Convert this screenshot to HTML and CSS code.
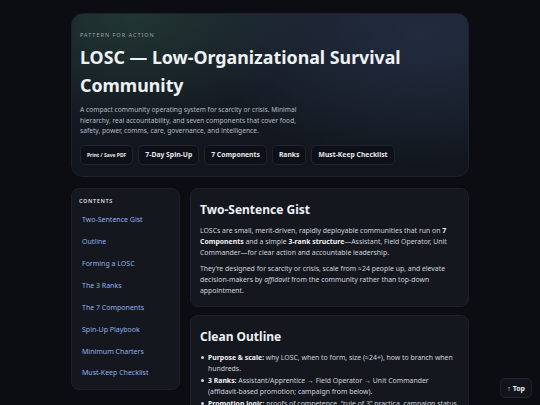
FILE: index.html
```html
<!DOCTYPE html>
<html lang="en">
<head>
<meta charset="utf-8">
<title>LOSC — Pattern for Action</title>
<link rel="stylesheet" href="styles.css">
</head>
<body>
<div class="wrap">
  <header class="hero">
    <div class="eyebrow">PATTERN FOR ACTION</div>
    <h1 class="title">LOSC — Low-Organizational Survival Community</h1>
    <p class="lede">A compact community operating system for scarcity or crisis. Minimal hierarchy, real accountability, and seven components that cover food, safety, power, comms, care, governance, and intelligence.</p>
    <div class="actions">
      <a class="btn btn-small">Print / Save PDF</a>
      <a class="btn">7-Day Spin-Up</a>
      <a class="btn">7 Components</a>
      <a class="btn">Ranks</a>
      <a class="btn">Must-Keep Checklist</a>
    </div>
  </header>
  <div class="layout">
    <nav class="toc">
      <div class="toc-title">CONTENTS</div>
      <a class="toc-link">Two-Sentence Gist</a>
      <a class="toc-link">Outline</a>
      <a class="toc-link">Forming a LOSC</a>
      <a class="toc-link">The 3 Ranks</a>
      <a class="toc-link">The 7 Components</a>
      <a class="toc-link">Spin-Up Playbook</a>
      <a class="toc-link">Minimum Charters</a>
      <a class="toc-link">Must-Keep Checklist</a>
    </nav>
    <main class="main">
      <section class="card">
        <h2 class="card-title">Two-Sentence Gist</h2>
        <p>LOSCs are small, merit-driven, rapidly deployable communities that run on <b>7 Components</b> and a simple <b>3-rank structure</b>—Assistant, Field Operator, Unit Commander—for clear action and accountable leadership.</p>
        <p>They’re designed for scarcity or crisis, scale from ≈24 people up, and elevate decision-makers by <i>affidavit</i> from the community rather than top-down appointment.</p>
      </section>
      <section class="card">
        <h2 class="card-title">Clean Outline</h2>
        <ul class="list">
          <li><b>Purpose &amp; scale:</b> why LOSC, when to form, size (≈24+), how to branch when hundreds.</li>
          <li><b>3 Ranks:</b> Assistant/Apprentice → Field Operator → Unit Commander (affidavit-based promotion; campaign from below).</li>
          <li><b>Promotion logic:</b> proofs of competence, “rule of 3” practica, campaign status.</li>
        </ul>
      </section>
    </main>
  </div>
</div>
<a class="top-btn">↑ Top</a>
</body>
</html>
```

FILE: styles.css
```css
* { box-sizing: border-box; }
html, body { margin: 0; padding: 0; }
body {
  background: #0b0d12;
  color: #d9dde4;
  font-family: "Noto Sans", "Open Sans", sans-serif;
  height: 405px;
  overflow: hidden;
}
.wrap {
  width: 398px;
  margin: 0 auto;
  padding-top: 13px;
}
.hero {
  border-radius: 12px;
  border: 1px solid #1c212b;
  padding: 17px 8px 11.5px 8px;
  background:
    radial-gradient(ellipse 170px 110px at 15% 0%, rgba(38, 68, 56, 0.6), rgba(38,68,56,0) 100%),
    radial-gradient(ellipse 220px 130px at 88% 12%, rgba(34, 44, 64, 0.95), rgba(34,44,64,0) 100%),
    linear-gradient(180deg, #19202a 0%, #11151c 100%);
}
.eyebrow {
  font-size: 5.5px;
  letter-spacing: 1px;
  color: #9aa3ad;
  line-height: 8px;
}
.title {
  margin: 4px 0 0;
  font-size: 17.8px;
  line-height: 28px;
  font-weight: 700;
  color: #eef1f5;
}
.lede {
  margin: 6px 0 0;
  max-width: 226px;
  font-size: 6.65px;
  line-height: 10.7px;
  color: #b3bac4;
}
.actions {
  display: flex;
  gap: 5px;
  margin-top: 7.5px;
}
.btn {
  display: flex;
  align-items: center;
  height: 20px;
  padding: 0 6px;
  border-radius: 5px;
  border: 1px solid #1f2430;
  background: #0d1017;
  color: #e6e9ee;
  font-size: 6.8px;
  font-weight: 700;
}
.btn-small { font-size: 5px; padding: 0 6px; }
.layout {
  display: flex;
  gap: 10px;
  margin-top: 11px;
  align-items: flex-start;
}
.toc {
  width: 109px;
  flex: none;
  background: #14171e;
  border: 1px solid #1c2029;
  border-radius: 8px;
  padding: 8px 7px 5px;
  display: flex;
  flex-direction: column;
}
.toc-title {
  font-size: 5.5px;
  font-weight: 700;
  letter-spacing: 0.6px;
  color: #c4c8cf;
  line-height: 8px;
  margin-bottom: 4px;
}
.toc-link {
  display: block;
  padding: 0 3px;
  font-size: 7px;
  line-height: 21.9px;
  color: #8fb1ea;
}
.main {
  flex: 1;
  display: flex;
  flex-direction: column;
  gap: 8px;
}
.card {
  background: #14171e;
  border: 1px solid #1c2029;
  border-radius: 8px;
  padding: 11px 9px 10px;
}
.card-title {
  margin: 0 0 5px;
  font-size: 12px;
  line-height: 20px;
  font-weight: 700;
  color: #eef1f5;
}
.card p {
  margin: 0 0 5px;
  font-size: 6.9px;
  line-height: 11px;
  color: #cfd4dc;
}
.card p:last-child { margin-bottom: 0; }
.card p b { color: #f1f3f6; }
.list {
  margin: 0;
  padding: 0;
  list-style: none;
  font-size: 6.9px;
  line-height: 11px;
  color: #cfd4dc;
}
.list li {
  position: relative;
  padding-left: 8px;
  margin-bottom: 1px;
}
.list li::before {
  content: "";
  position: absolute;
  left: 1px;
  top: 4px;
  width: 3px;
  height: 3px;
  border-radius: 50%;
  background: #cfd4dc;
}
.list b { color: #f1f3f6; }
.top-btn {
  position: fixed;
  right: 8px;
  bottom: 7px;
  height: 20px;
  padding: 0 6px;
  display: flex;
  align-items: center;
  border-radius: 5px;
  border: 1px solid #1f2430;
  background: #11141b;
  color: #e6e9ee;
  font-size: 7px;
  font-weight: 700;
}
```
